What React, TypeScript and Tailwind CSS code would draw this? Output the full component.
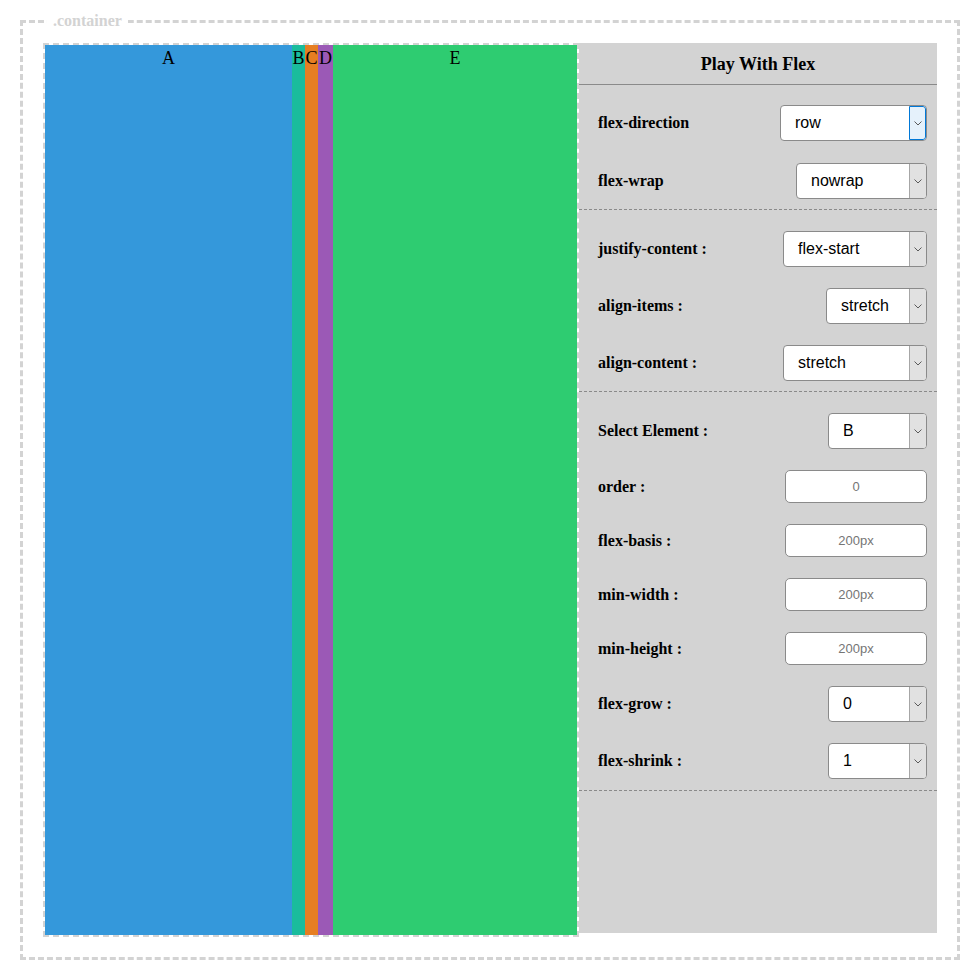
import clsx from "clsx";

const boxes = [
  { id: "A", className: "w-[247px] bg-[#3498db]" },
  { id: "B", className: "w-[13px] bg-[#1abc9c]" },
  { id: "C", className: "w-[13px] bg-[#e67e22]" },
  { id: "D", className: "w-[15px] bg-[#9b59b6]" },
  { id: "E", className: "flex-1 bg-[#2ecc71]" },
];

const serif = "font-['Liberation_Serif','Times_New_Roman',serif]";
const sans = "font-['Liberation_Sans',Arial,sans-serif]";

function Chevron() {
  return (
    <svg width="8" height="5" viewBox="0 0 8 5">
      <path d="M0.5 0.5 L4 4 L7.5 0.5" fill="none" stroke="#5a5a5a" strokeWidth="1" />
    </svg>
  );
}

function FakeSelect({
  value,
  width,
  focused = false,
}: {
  value: string;
  width: string;
  focused?: boolean;
}) {
  return (
    <div
      className={clsx(
        "flex h-[36px] shrink-0 items-stretch overflow-hidden rounded-[4px] border border-[#8a8a8a] bg-white",
        width
      )}
    >
      <span className={clsx("flex flex-1 items-center pl-[14px] text-[16px] text-black", sans)}>
        {value}
      </span>
      <span
        className={clsx(
          "flex w-[17px] items-center justify-center",
          focused
            ? "rounded-r-[3px] border border-[#0078d7] bg-[#e5f1fb]"
            : "border-l border-[#a6a6a6] bg-[#e1e1e1]"
        )}
      >
        <Chevron />
      </span>
    </div>
  );
}

function TextBox({ placeholder }: { placeholder: string }) {
  return (
    <input
      placeholder={placeholder}
      className={clsx(
        "h-[33px] w-[142px] shrink-0 rounded-[5px] border border-[#8a8a8a] bg-white text-center text-[13px] outline-none placeholder:text-[#757575]",
        sans
      )}
    />
  );
}

function Row({ label, children }: { label: string; children: React.ReactNode }) {
  return (
    <div className="flex items-center justify-between pl-[19px] pr-[10px]">
      <span className={clsx("text-[16px] font-bold text-black", serif)}>{label}</span>
      {children}
    </div>
  );
}

export default function App() {
  return (
    <div className="relative m-[20px] h-[940px] border-[3px] border-dashed border-[#d3d3d3] p-[20px]">
      <span
        className={clsx(
          "absolute left-[24px] top-[-14px] bg-white px-[6px] text-[16px] font-bold text-[#d3d3d3]",
          serif
        )}
      >
        .container
      </span>

      <div className="flex h-full items-start">
        <div className="flex h-full w-[536px] shrink-0 border-2 border-dashed border-[#d3d3d3]">
          {boxes.map((b) => (
            <div
              key={b.id}
              className={clsx("h-full shrink-0 text-center text-[18px] text-black", serif, b.className)}
            >
              {b.id}
            </div>
          ))}
        </div>

        <div className="flex h-[890px] flex-1 flex-col bg-[#d3d3d3]">
          <div
            className={clsx(
              "h-[42px] border-b border-[#8a8a8a] pt-[8px] text-center text-[18px] font-bold text-black",
              serif
            )}
          >
            Play With Flex
          </div>

          <div className="flex flex-col gap-[22px] border-b border-dashed border-[#8a8a8a] pb-[10px] pt-[20px]">
            <Row label="flex-direction">
              <FakeSelect value="row" width="w-[147px]" focused />
            </Row>
            <Row label="flex-wrap">
              <FakeSelect value="nowrap" width="w-[131px]" />
            </Row>
          </div>

          <div className="flex flex-col gap-[21px] border-b border-dashed border-[#8a8a8a] pb-[10px] pt-[21px]">
            <Row label="justify-content :">
              <FakeSelect value="flex-start" width="w-[144px]" />
            </Row>
            <Row label="align-items :">
              <FakeSelect value="stretch" width="w-[101px]" />
            </Row>
            <Row label="align-content :">
              <FakeSelect value="stretch" width="w-[144px]" />
            </Row>
          </div>

          <div className="flex flex-col gap-[21px] border-b border-dashed border-[#8a8a8a] pb-[11px] pt-[21px]">
            <Row label="Select Element :">
              <FakeSelect value="B" width="w-[99px]" />
            </Row>
            <Row label="order :">
              <TextBox placeholder="0" />
            </Row>
            <Row label="flex-basis :">
              <TextBox placeholder="200px" />
            </Row>
            <Row label="min-width :">
              <TextBox placeholder="200px" />
            </Row>
            <Row label="min-height :">
              <TextBox placeholder="200px" />
            </Row>
            <Row label="flex-grow :">
              <FakeSelect value="0" width="w-[99px]" />
            </Row>
            <Row label="flex-shrink :">
              <FakeSelect value="1" width="w-[99px]" />
            </Row>
          </div>
        </div>
      </div>
    </div>
  );
}
